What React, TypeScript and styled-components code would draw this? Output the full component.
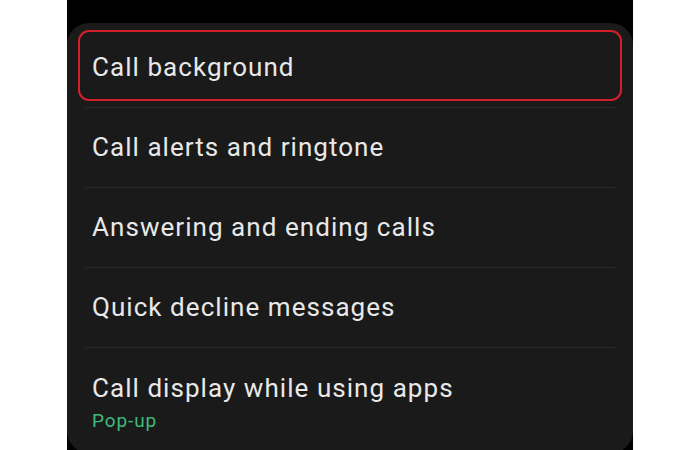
import React from 'react'
import styled, { createGlobalStyle } from 'styled-components'

const GlobalStyle = createGlobalStyle`
  html, body {
    margin: 0;
    padding: 0;
    background: #ffffff;
  }
  body {
    font-family: Roboto, "Noto Sans", "Liberation Sans", sans-serif;
  }
`

const Page = styled.div`
  width: 700px;
  height: 450px;
  display: flex;
  justify-content: center;
  overflow: hidden;
  background: #ffffff;
`

const Screen = styled.div`
  width: 566px;
  height: 450px;
  background: #000000;
  padding-top: 23px;
  box-sizing: border-box;
`

const Card = styled.div`
  background: #1a1a1a;
  border-radius: 22px;
  height: 430px;
  padding-top: 5px;
  box-sizing: border-box;
`

const Row = styled.div<{ $selected?: boolean; $tall?: boolean }>`
  position: relative;
  margin: 0 18px;
  padding: ${p => (p.$tall ? '25px 7px 0' : '0 7px 2px')};
  height: ${p => (p.$tall ? 'auto' : '80px')};
  box-sizing: border-box;
  display: flex;
  flex-direction: column;
  justify-content: ${p => (p.$tall ? 'flex-start' : 'center')};
  border-bottom: ${p => (p.$tall ? 'none' : '1px solid #2b2b2b')};

  ${p =>
    p.$selected &&
    `
    &::before {
      content: '';
      position: absolute;
      top: 2px;
      bottom: 6px;
      left: -7px;
      right: -7px;
      border: 2.5px solid #d4202b;
      border-radius: 11px;
    }
  `}
`

const Title = styled.div`
  color: #e8e8e8;
  font-size: 26px;
  line-height: 30px;
  letter-spacing: 1.05px;
`

const Sub = styled.div`
  color: #3dba7c;
  font-size: 19px;
  line-height: 24px;
  letter-spacing: 0.9px;
  margin-top: 6px;
`

const items = [
  { title: 'Call background', selected: true },
  { title: 'Call alerts and ringtone' },
  { title: 'Answering and ending calls' },
  { title: 'Quick decline messages' },
]

export default function App() {
  return (
    <>
      <GlobalStyle />
      <Page>
        <Screen>
          <Card>
            {items.map(item => (
              <Row key={item.title} $selected={item.selected}>
                <Title>{item.title}</Title>
              </Row>
            ))}
            <Row $tall>
              <Title>Call display while using apps</Title>
              <Sub>Pop-up</Sub>
            </Row>
          </Card>
        </Screen>
      </Page>
    </>
  )
}
